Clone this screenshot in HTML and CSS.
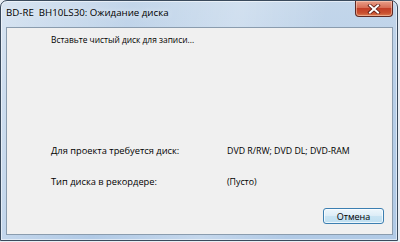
FILE: index.html
```html
<!DOCTYPE html>
<html lang="ru">
<head>
<meta charset="utf-8">
<title>BD-RE BH10LS30: Ожидание диска</title>
<link rel="stylesheet" href="styles.css">
</head>
<body>
<div class="window">
  <div class="titlebar">
    <div class="title">BD-RE&nbsp; BH10LS30: Ожидание диска</div>
    <div class="close" aria-label="Закрыть">
      <svg width="14" height="10" viewBox="0 0 14 10">
        <path d="M3 1.5 L11 8.5 M11 1.5 L3 8.5" stroke="#5a1a12" stroke-width="3.6" stroke-linecap="square" fill="none"/>
        <path d="M3 1.5 L11 8.5 M11 1.5 L3 8.5" stroke="#ffffff" stroke-width="2" stroke-linecap="square" fill="none"/>
      </svg>
    </div>
  </div>
  <div class="client">
    <div class="message">Вставьте чистый диск для записи...</div>
    <div class="info">
      <div class="label">Для проекта требуется диск:</div>
      <div class="value">DVD R/RW; DVD DL; DVD-RAM</div>
      <div class="label">Тип диска в рекордере:</div>
      <div class="value">(Пусто)</div>
    </div>
    <div class="actions">
      <button class="btn">Отмена</button>
    </div>
  </div>
</div>
</body>
</html>
```

FILE: styles.css
```css
html, body {
  margin: 0;
  padding: 0;
  background: #e8eef4;
}

body {
  width: 400px;
  height: 242px;
  overflow: hidden;
  font-family: "Open Sans", "Noto Sans", sans-serif;
}

.window {
  box-sizing: border-box;
  width: 398px;
  height: 241px;
  border: 1px solid #3a4a5c;
  border-radius: 7px 7px 0 0;
  background:
    linear-gradient(100deg, rgba(255,255,255,0.35) 0%, rgba(255,255,255,0) 30%, rgba(255,255,255,0.25) 55%, rgba(255,255,255,0) 75%),
    linear-gradient(180deg, #c3d6ea 0%, #b8cfe8 40%, #b1cae6 100%);
  box-shadow: inset 0 0 0 1px rgba(255,255,255,0.55);
  padding: 0 4px 5px 5px;
  display: flex;
  flex-direction: column;
}

.titlebar {
  height: 26px;
  display: flex;
  justify-content: space-between;
  align-items: flex-start;
  flex: none;
}

.title {
  font-size: 9.7px;
  line-height: 14px;
  color: #000;
  padding: 5px 0 0 0;
  white-space: nowrap;
  text-shadow: 0 0 6px rgba(255,255,255,0.9);
}

.close {
  width: 38px;
  height: 16px;
  box-sizing: border-box;
  border: 1px solid #5e2a24;
  border-top: none;
  border-radius: 0 0 4px 4px;
  background: linear-gradient(180deg, #e9a08a 0%, #d66d55 45%, #c23f27 50%, #c9502f 80%, #dc7d52 100%);
  box-shadow: inset 0 0 0 1px rgba(255,220,200,0.5);
  display: flex;
  align-items: center;
  justify-content: center;
}

.close svg {
  display: block;
}

.client {
  flex: 1;
  box-sizing: border-box;
  background: #f0f0f0;
  border: 1px solid #8a9cae;
  padding: 6px 8px 0 44px;
  display: flex;
  flex-direction: column;
  font-size: 9.3px;
  line-height: 12px;
  color: #000;
}

.message {
  white-space: nowrap;
  font-size: 8.4px;
}

.info {
  margin-top: 99px;
  display: grid;
  grid-template-columns: 176px 1fr;
  row-gap: 19px;
  white-space: nowrap;
}

.value {
  font-size: 8.8px;
}

.actions {
  margin-top: 20px;
  display: flex;
  justify-content: flex-end;
}

.btn {
  box-sizing: border-box;
  width: 61px;
  height: 16px;
  padding: 0;
  font-family: inherit;
  font-size: 9px;
  color: #000;
  border: 1px solid #3c7fb1;
  border-radius: 3px;
  background: linear-gradient(180deg, #eef7fc 0%, #dcedf7 48%, #c9e4f3 52%, #bfdff1 100%);
  box-shadow: inset 0 0 0 1px rgba(255,255,255,0.7);
}
```
